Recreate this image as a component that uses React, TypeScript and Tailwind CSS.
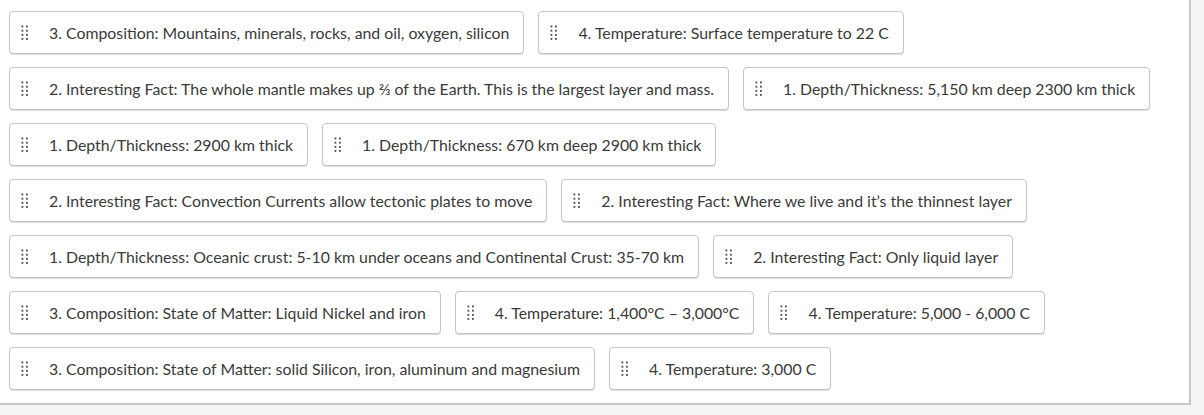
import React from 'react';

const rows: string[][] = [
  ['3. Composition: Mountains, minerals, rocks, and oil, oxygen, silicon', '4. Temperature: Surface temperature to 22 C'],
  [
    '2. Interesting Fact: The whole mantle makes up \u2154 of the Earth. This is the largest layer and mass.',
    '1. Depth/Thickness: 5,150 km deep 2300 km thick',
  ],
  ['1. Depth/Thickness: 2900 km thick', '1. Depth/Thickness: 670 km deep 2900 km thick'],
  ['2. Interesting Fact: Convection Currents allow tectonic plates to move', '2. Interesting Fact: Where we live and it\u2019s the thinnest layer'],
  ['1. Depth/Thickness: Oceanic crust: 5-10 km under oceans and Continental Crust: 35-70 km', '2. Interesting Fact: Only liquid layer'],
  ['3. Composition: State of Matter: Liquid Nickel and iron', '4. Temperature: 1,400\u00b0C \u2013 3,000\u00b0C', '4. Temperature: 5,000 - 6,000 C'],
  ['3. Composition: State of Matter: solid Silicon, iron, aluminum and magnesium', '4. Temperature: 3,000 C'],
];

function DragHandle() {
  return (
    <svg width="7" height="15" viewBox="0 0 7 15" className="shrink-0 text-[#4a4a4a]" fill="currentColor">
      {[1.5, 5.8, 10, 14].map((y) => (
        <React.Fragment key={y}>
          <rect x="0.5" y={y - 1} width="1.8" height="1.8" />
          <rect x="5" y={y - 1} width="1.8" height="1.8" />
        </React.Fragment>
      ))}
    </svg>
  );
}

function Answer({ text }: { text: string }) {
  return (
    <div className="flex h-[43px] items-center rounded-[4px] border border-[#c7c7c7] bg-white pl-[11px] pr-[14px] shadow-[0_1px_0_#dcdcdc]">
      <DragHandle />
      <span className="ml-[21px] mt-[1px] whitespace-nowrap text-[15.85px] text-[#3a3a3a]">{text}</span>
    </div>
  );
}

export default function App() {
  return (
    <div className="h-[415px] w-[1204px] bg-[#f5f5f5]" style={{ fontFamily: 'Lato, "Open Sans", sans-serif' }}>
      <div className="h-[405px] w-[1191px] border-b-2 border-r-2 border-[#c8c8c8] bg-white pl-[9px] pt-[11px]">
        <div className="flex flex-col gap-[13px]">
          {rows.map((row, i) => (
            <div key={i} className="flex gap-[14px]">
              {row.map((t) => (
                <Answer key={t} text={t} />
              ))}
            </div>
          ))}
        </div>
      </div>
    </div>
  );
}
